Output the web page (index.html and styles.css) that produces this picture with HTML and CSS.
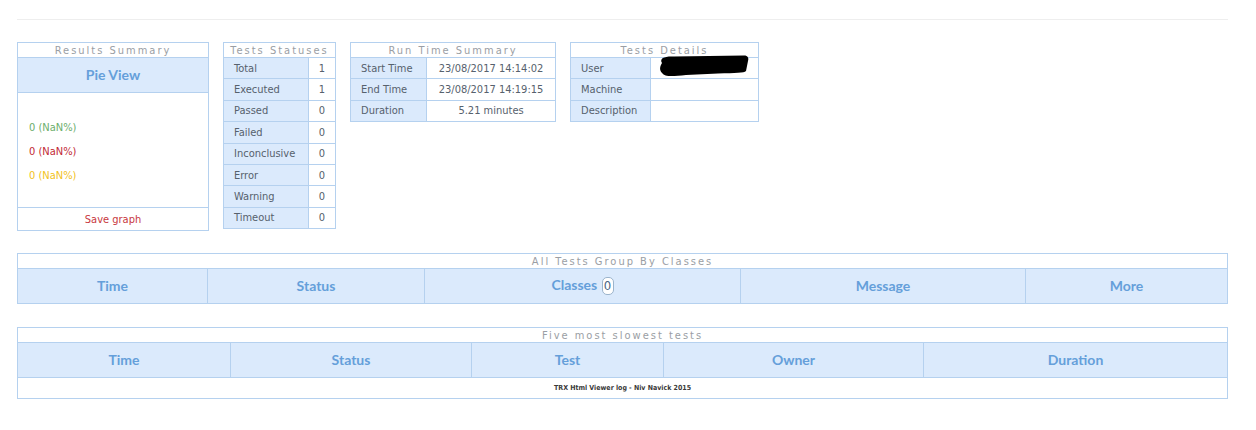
FILE: index.html
```html
<!DOCTYPE html>
<html lang="en">
<head>
<meta charset="utf-8">
<title>TRX Html Viewer</title>
<link rel="stylesheet" href="styles.css">
</head>
<body>
<div class="page">
  <div class="rule"></div>

  <div class="top">
    <table class="grid summary">
      <tr class="cap-row"><th class="cap">Results Summary</th></tr>
      <tr class="head-row"><th class="head">Pie View</th></tr>
      <tr class="pie-row">
        <td class="pie">
          <div class="legend passed">0 (NaN%)</div>
          <div class="legend failed">0 (NaN%)</div>
          <div class="legend warn">0 (NaN%)</div>
        </td>
      </tr>
      <tr class="save-row"><td class="save">Save graph</td></tr>
    </table>

    <table class="grid statuses">
      <colgroup><col class="c-lab1"><col class="c-val1"></colgroup>
      <tr class="cap-row"><th class="cap" colspan="2">Tests Statuses</th></tr>
      <tr class="row"><td class="lab">Total</td><td class="val">1</td></tr>
      <tr class="row"><td class="lab">Executed</td><td class="val">1</td></tr>
      <tr class="row"><td class="lab">Passed</td><td class="val">0</td></tr>
      <tr class="row"><td class="lab">Failed</td><td class="val">0</td></tr>
      <tr class="row"><td class="lab">Inconclusive</td><td class="val">0</td></tr>
      <tr class="row"><td class="lab">Error</td><td class="val">0</td></tr>
      <tr class="row"><td class="lab">Warning</td><td class="val">0</td></tr>
      <tr class="row"><td class="lab">Timeout</td><td class="val">0</td></tr>
    </table>

    <table class="grid runtime">
      <colgroup><col class="c-lab2"><col class="c-val2"></colgroup>
      <tr class="cap-row"><th class="cap" colspan="2">Run Time Summary</th></tr>
      <tr class="row"><td class="lab">Start Time</td><td class="val">23/08/2017 14:14:02</td></tr>
      <tr class="row"><td class="lab">End Time</td><td class="val">23/08/2017 14:19:15</td></tr>
      <tr class="row"><td class="lab">Duration</td><td class="val">5.21 minutes</td></tr>
    </table>

    <div class="details-wrap">
      <table class="grid details">
        <colgroup><col class="c-lab3"><col class="c-val3"></colgroup>
        <tr class="cap-row"><th class="cap" colspan="2">Tests Details</th></tr>
        <tr class="row"><td class="lab">User</td><td class="val"></td></tr>
        <tr class="row"><td class="lab">Machine</td><td class="val"></td></tr>
        <tr class="row"><td class="lab">Description</td><td class="val"></td></tr>
      </table>
      <svg class="redact" width="94" height="24" viewBox="0 0 94 24" aria-hidden="true">
        <path d="M6 9 C3 4 9 2 18 2.5 L88 1.5 C92 1.5 93 4 92 7 L90 17 C88 19 80 19 62 19.5 L30 21 C16 22.5 9 23 6 19 C3 16 4 12 6 9 Z" fill="#000"/>
      </svg>
    </div>
  </div>

  <table class="grid wide classes">
    <colgroup>
      <col style="width:190px"><col style="width:217px"><col style="width:316px"><col style="width:285px"><col style="width:202px">
    </colgroup>
    <tr class="cap-row"><th class="cap" colspan="5">All Tests Group By Classes</th></tr>
    <tr class="head-row">
      <th class="head">Time</th>
      <th class="head">Status</th>
      <th class="head">Classes <span class="badge">0</span></th>
      <th class="head">Message</th>
      <th class="head">More</th>
    </tr>
  </table>

  <table class="grid wide slowest">
    <colgroup>
      <col style="width:213px"><col style="width:241px"><col style="width:192px"><col style="width:260px"><col style="width:304px">
    </colgroup>
    <tr class="cap-row"><th class="cap" colspan="5">Five most slowest tests</th></tr>
    <tr class="head-row">
      <th class="head">Time</th>
      <th class="head">Status</th>
      <th class="head">Test</th>
      <th class="head">Owner</th>
      <th class="head">Duration</th>
    </tr>
    <tr class="foot-row"><td class="foot" colspan="5">TRX Html Viewer log - Niv Navick 2015</td></tr>
  </table>
</div>
</body>
</html>
```

FILE: styles.css
```css
body {
  margin: 0;
  background: #ffffff;
  font-family: "DejaVu Sans Condensed", "Liberation Sans", sans-serif;
  font-size: 11px;
  color: #56616d;
}

.page {
  width: 1211px;
  margin-left: 17px;
  padding-top: 19px;
}

.rule {
  height: 1px;
  background: #eeeeee;
}

.top {
  display: flex;
  align-items: flex-start;
  gap: 14px;
  margin-top: 22px;
}

.grid {
  border-collapse: collapse;
  table-layout: fixed;
  background: #ffffff;
}

.grid th,
.grid td {
  border: 1px solid #b5d1ef;
  padding: 0;
}

.cap-row { height: 15px; }

.cap {
  font-weight: normal;
  font-size: 11px;
  line-height: 13px;
  letter-spacing: 2px;
  color: #9a9ea4;
  text-align: center;
  background: #ffffff;
  white-space: nowrap;
  overflow: hidden;
}

.head-row { height: 35px; }

.head {
  background: #dbeafc;
  color: #659fda;
  font-family: Lato, "Open Sans", sans-serif;
  font-weight: 700;
  font-size: 14px;
  text-align: center;
  vertical-align: middle;
  padding-bottom: 2px !important;
}

.summary { width: 192px; }

.pie-row { height: 115px; }

.pie {
  vertical-align: top;
  padding: 23px 0 0 11px !important;
}

.legend {
  line-height: 24px;
  font-size: 11px;
}

.passed { color: #6cae6c; }
.failed { color: #c22a35; }
.warn { color: #f2c21a; }

.save-row { height: 23px; }

.save {
  text-align: center;
  color: #c8383e;
  font-size: 11px;
}

.row { height: 21.4px; }

.lab {
  background: #dbeafc;
  padding-left: 10px !important;
  white-space: nowrap;
}

.val {
  text-align: center;
  background: #ffffff;
  white-space: nowrap;
}

.statuses { width: 112px; }
.c-lab1 { width: 85px; }
.c-val1 { width: 27px; }

.runtime { width: 205px; }
.c-lab2 { width: 76px; }
.c-val2 { width: 129px; }

.details-wrap { position: relative; }
.details { width: 188px; }
.c-lab3 { width: 80px; }
.c-val3 { width: 108px; }

.redact {
  position: absolute;
  left: 86px;
  top: 12px;
}

.wide { width: 1210px; }

.classes { margin-top: 22px; }
.slowest { margin-top: 23px; }

.badge {
  display: inline-block;
  box-sizing: border-box;
  height: 18px;
  min-width: 12px;
  padding: 0 1px;
  border: 1px solid #9bb4cc;
  border-radius: 5px;
  background: #ffffff;
  color: #4a6684;
  font-family: "DejaVu Sans Condensed", "Liberation Sans", sans-serif;
  font-weight: normal;
  font-size: 13px;
  line-height: 16px;
  vertical-align: baseline;
  margin-left: 1px;
}

.foot-row { height: 21px; }

.foot {
  text-align: center;
  font-size: 7px;
  font-weight: bold;
  color: #3a3a3a;
}
```
